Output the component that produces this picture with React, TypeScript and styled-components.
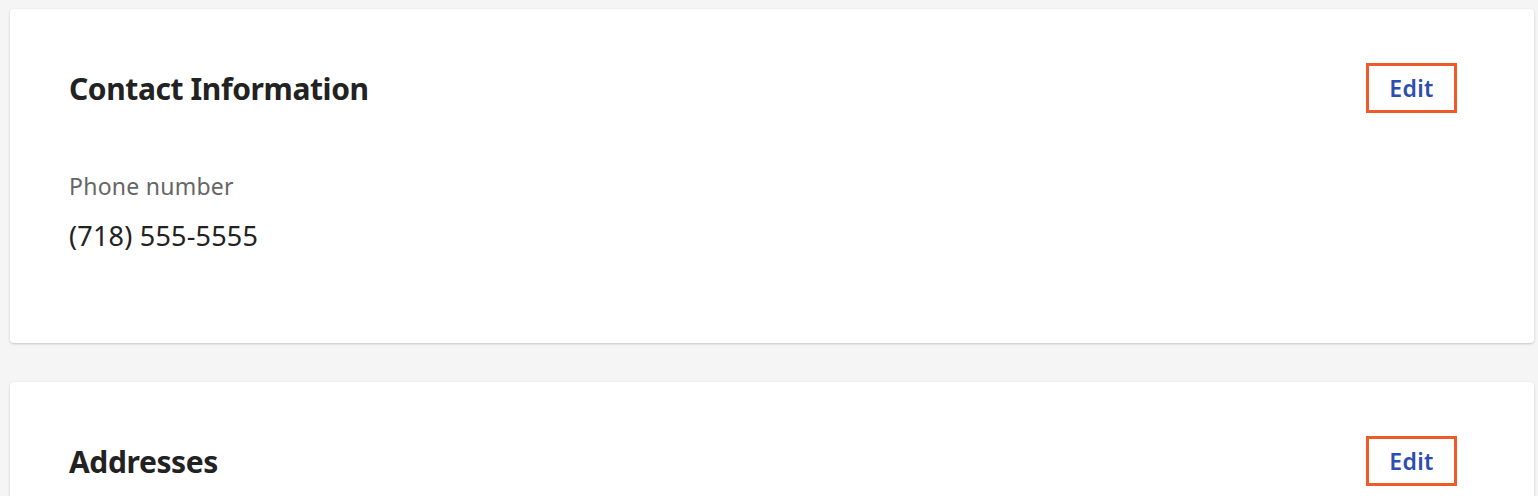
import React from "react"
import styled, { createGlobalStyle } from "styled-components"

const GlobalStyle = createGlobalStyle`
  html, body {
    margin: 0;
    padding: 0;
    background: #f5f5f5;
    font-family: "Noto Sans", "Open Sans", Arial, sans-serif;
  }
`

const Page = styled.div`
  display: flex;
  flex-direction: column;
  gap: 39px;
  padding: 9px 4px 0 10px;
  height: 496px;
  box-sizing: border-box;
  overflow: hidden;
`

const Card = styled.section<{ $minHeight?: number }>`
  background: #fff;
  border-radius: 4px;
  box-shadow: 0 1px 3px rgba(0,0,0,0.14), 0 1px 2px rgba(0,0,0,0.06);
  padding: 54px 77px 0 59px;
  flex-shrink: 0;
  min-height: ${({ $minHeight }) => ($minHeight ? `${$minHeight}px` : 'auto')};
`

const CardHeader = styled.div`
  display: flex;
  align-items: center;
  justify-content: space-between;
  height: 50px;
`

const Title = styled.h2`
  margin: 0;
  font-size: 30px;
  font-weight: 700;
  color: #222;
  letter-spacing: -0.4px;
`

const EditButton = styled.button`
  width: 91px;
  height: 50px;
  box-sizing: border-box;
  border: 3px solid #f05a28;
  background: #fff;
  color: #2d4db3;
  font-family: inherit;
  font-size: 23px;
  font-weight: 600;
  letter-spacing: 0.4px;
  padding: 0;
  cursor: pointer;
`

const Field = styled.div`
  display: flex;
  flex-direction: column;
  padding: 58px 0 89px;
`

const Label = styled.span`
  font-size: 23px;
  color: #666;
  line-height: 30px;
  letter-spacing: 0.25px;
`

const Value = styled.span`
  font-size: 27px;
  color: #222;
  line-height: 36px;
  margin-top: 17px;
  letter-spacing: 0.2px;
`

export default function App() {
  return (
    <>
      <GlobalStyle />
      <Page>
        <Card>
          <CardHeader>
            <Title>Contact Information</Title>
            <EditButton>Edit</EditButton>
          </CardHeader>
          <Field>
            <Label>Phone number</Label>
            <Value>(718) 555-5555</Value>
          </Field>
        </Card>
        <Card $minHeight={300}>
          <CardHeader>
            <Title>Addresses</Title>
            <EditButton>Edit</EditButton>
          </CardHeader>
        </Card>
      </Page>
    </>
  )
}
